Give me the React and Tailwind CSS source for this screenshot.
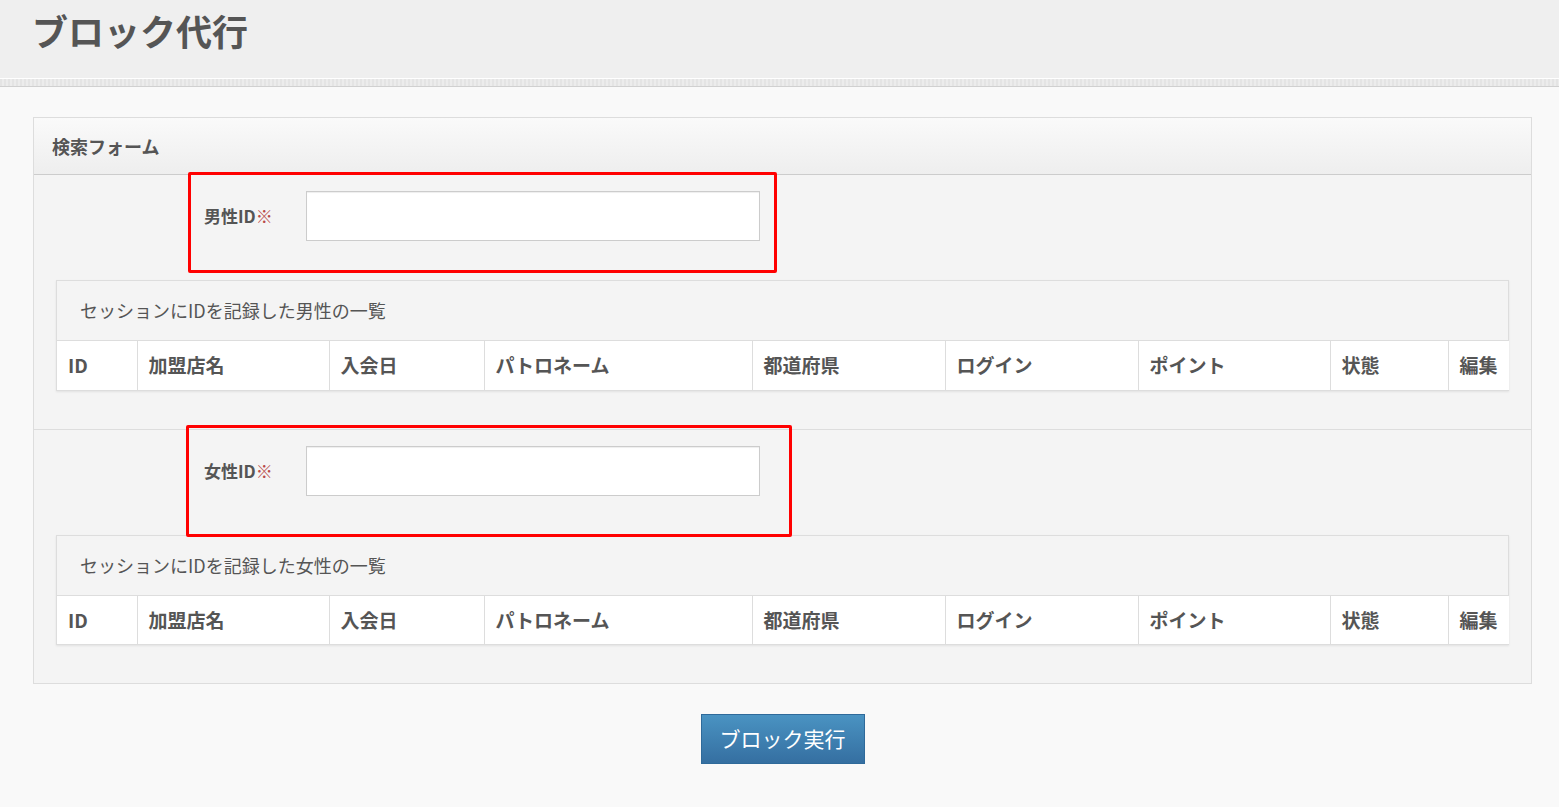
import React from 'react';

const cols = [
  { label: 'ID', w: 80 },
  { label: '加盟店名', w: 192 },
  { label: '入会日', w: 155 },
  { label: 'パトロネーム', w: 268 },
  { label: '都道府県', w: 193 },
  { label: 'ログイン', w: 193 },
  { label: 'ポイント', w: 192 },
  { label: '状態', w: 118 },
  { label: '編集', w: 61 },
];

function SessionTable({ caption }) {
  return (
    <div className="border border-[#dddddd] bg-[#f4f4f4] shadow-[0_1px_2px_rgba(0,0,0,0.08)]">
      <div className="h-[59px] flex items-center pl-[23px] text-[18px] text-[#555]">{caption}</div>
      <table className="w-full table-fixed border-collapse bg-white">
        <colgroup>
          {cols.map((c) => (
            <col key={c.label} style={{ width: c.w }} />
          ))}
        </colgroup>
        <thead>
          <tr className="h-[49px]">
            {cols.map((c, i) => (
              <th
                key={c.label}
                className={`text-left font-bold text-[19px] text-[#555] px-[11px] py-0 border-t border-[#dddddd] ${i > 0 ? 'border-l' : ''}`}
              >
                {c.label}
              </th>
            ))}
          </tr>
        </thead>
      </table>
    </div>
  );
}

function IdRow({ label, box }) {
  return (
    <div className="relative flex items-center h-[50px]">
      <div className="w-[148px]" />
      <label className="w-[102px] text-[17px] font-bold text-[#555]">
        {label}
        <span className="text-[#b94a48] font-normal">※</span>
      </label>
      <input type="text" className="w-[454px] h-[50px] bg-white border border-[#cccccc] shadow-[inset_0_1px_1px_rgba(0,0,0,0.07)] outline-none" />
      {/* red annotation frame */}
      <div className={`absolute border-[3px] border-[#ff0000] rounded-[2px] pointer-events-none ${box}`} />
    </div>
  );
}

export default function App() {
  return (
    <div
      className="min-h-[807px] bg-[#f9f9f9] text-[#555]"
      style={{ fontFamily: '"Noto Sans CJK JP", "Liberation Sans", sans-serif' }}
    >
      {/* page title bar */}
      <div className="h-[78px] bg-[#efefef] flex items-center pl-[32px]">
        <h1 className="text-[36px] font-bold text-[#555] leading-none -mt-[18px]">ブロック代行</h1>
      </div>
      <div className="h-[9px] border-t border-white border-b border-b-[#d0d0d0] bg-[repeating-linear-gradient(90deg,#e4e4e4_0px,#e4e4e4_2px,#ececec_2px,#ececec_4px)]" />

      <div className="pl-[33px] pr-[27px] pt-[30px] pb-[43px]">
        <div className="border border-[#dddddd] bg-[#f4f4f4]">
          <div className="h-[57px] flex items-center pl-[18px] bg-gradient-to-b from-[#fafafa] to-[#eeeeee] border-b border-[#cccccc]">
            <span className="text-[18px] font-bold text-[#555]">検索フォーム</span>
          </div>

          <div className="px-[22px] pt-[16px] pb-[38px] border-b border-[#dddddd]">
            <IdRow label="男性ID" box="left-[132px] w-[589px] top-[-19px] h-[101px]" />
            <div className="mt-[39px]">
              <SessionTable caption="セッションにIDを記録した男性の一覧" />
            </div>
          </div>

          <div className="px-[22px] pt-[16px] pb-[38px]">
            <IdRow label="女性ID" box="left-[130px] w-[606px] top-[-21px] h-[112px]" />
            <div className="mt-[39px]">
              <SessionTable caption="セッションにIDを記録した女性の一覧" />
            </div>
          </div>
        </div>

        <div className="flex justify-center mt-[30px]">
          <button className="w-[164px] h-[50px] bg-gradient-to-b from-[#4a93c2] to-[#356fa1] border border-[#2f6a9a] text-white text-[21px]">
            ブロック実行
          </button>
        </div>
      </div>
    </div>
  );
}
